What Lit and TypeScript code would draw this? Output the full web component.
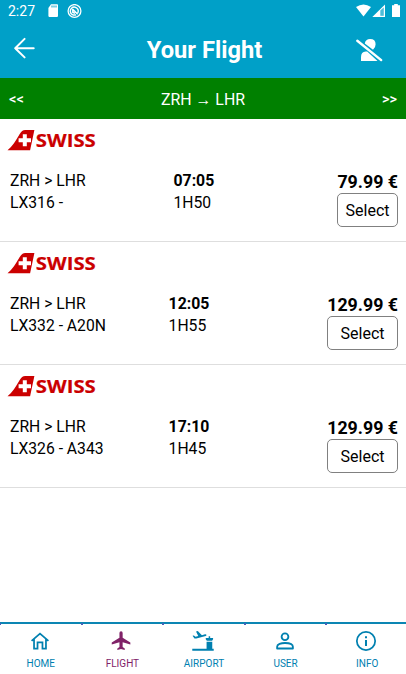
import { LitElement, html, css, svg } from "lit";
import { customElement, property } from "lit/decorators.js";

interface Flight { code: string; departs: string; duration: string; price: string; }

const flights: Flight[] = [
  { code: "LX316 -", departs: "07:05", duration: "1H50", price: "79.99 €" },
  { code: "LX332 - A20N", departs: "12:05", duration: "1H55", price: "129.99 €" },
  { code: "LX326 - A343", departs: "17:10", duration: "1H45", price: "129.99 €" },
];

const tabs = [
  { label: "HOME", icon: svg`<path fill="none" stroke="currentColor" stroke-width="1.9" d="M2.8 11.8 12 4l9.2 7.8M5.5 10v10.2h3.8v-6.8h5.4v6.8h3.8V10"/>` },
  { label: "FLIGHT", icon: svg`<path d="M22.2 15.8v-2.3l-8.4-5V3.2a1.75 1.75 0 0 0-3.5 0v5.3l-8.4 5v2.3l8.4-2.5v5.2L8 20.1v1.7l4-1.1 4.1 1.1v-1.7l-2.3-1.6v-5.2z"/>` },
  { label: "AIRPORT", icon: svg`<path d="m.6 6.3 1.5-.4 1.7 1.4 3-.8-2.4-5 1.9-.5 4.5 4.6 3.4-.9c1.6-.3 2.3 1.2.8 1.8L4.7 9.3l-2-.1zM15 8.6h3.2V6.7h1.6v1.9H23v1.5l-1.1 1.7h-5.7L15 10.1zM15.9 12.9h6.2v7.5h1.6v2.1H.3v-2.1h15.6z"/>` },
  { label: "USER", icon: svg`<g fill="none" stroke="currentColor" stroke-width="2"><circle cx="12" cy="7.4" r="3.7"/><path stroke-linejoin="round" d="M3.4 20.2v-1.9c0-2.8 4.3-4.1 8.6-4.1s8.6 1.3 8.6 4.1v1.9z"/></g>` },
  { label: "INFO", icon: svg`<circle cx="12" cy="12" r="10" fill="none" stroke="currentColor" stroke-width="1.9"/><path d="M10.9 6.7h2.2v2.2h-2.2zM10.9 10.9h2.2v6.5h-2.2z"/>` },
];

@customElement("flight-row")
class FlightRow extends LitElement {
  @property({ attribute: false }) flight!: Flight;

  static styles = css`
    :host { display: block; box-sizing: border-box; height: 123px; padding: 5px 8px 0 7px; border-bottom: 1px solid #dedede; }
    .logo { display: block; width: 94px; height: 32px; }
    .word { font: 700 18.4px "Open Sans", sans-serif; fill: #cb0000; stroke: #cb0000; stroke-width: .2; }
    .details { display: grid; grid-template-columns: 1fr 1fr auto; padding-left: 3px; margin-top: 14px; line-height: 21.5px; font-size: 15.7px; }
    .time { font-weight: 700; font-size: 15.8px; }
    .price { font-weight: 700; font-size: 17.8px; text-align: right; line-height: 24px; height: 22px; }
    .fare { display: flex; flex-direction: column; align-items: stretch; }
    button { box-sizing: border-box; height: 34px; min-width: 61px; padding: 0; margin-top: 1px; font: 16px Roboto, sans-serif; color: #000; background: #fff; border: 1px solid #808080; border-radius: 5px; }
  `;

  render() {
    const f = this.flight;
    return html`
      <svg class="logo" viewBox="0 -6 94 32" role="img" aria-label="SWISS">
        <path fill="#cb0000" d="M.5 20.3C5.5 16.5 8.8 10.5 12.4 4.6 14.4 1.3 15.7 0 18.2 0h9.2l-4.3 20.3z"/>
        <path fill="#fff" d="M15.8 4.2h4v4.1h4.2v3.9h-4.2v4.1h-4v-4.1h-4.2V8.3h4.2z"/>
        <text class="word" x="28.8" y="16.5" textLength="60" lengthAdjust="spacingAndGlyphs">SWISS</text>
      </svg>
      <div class="details">
        <div><div>ZRH &gt; LHR</div><div>${f.code}</div></div>
        <div><div class="time">${f.departs}</div><div>${f.duration}</div></div>
        <div class="fare"><div class="price">${f.price}</div><button>Select</button></div>
      </div>`;
  }
}

@customElement("app-root")
class AppRoot extends LitElement {
  static styles = css`
    :host { display: flex; flex-direction: column; height: 674px; overflow: hidden; background: #fff; color: #000; font-family: Roboto, sans-serif; }
    .status { display: flex; height: 22px; background: #00a0c8; color: #fff; align-items: center; font-size: 14px; padding: 0 6px 0 8px; }
    .clock { width: 38px; }
    .status svg { display: block; flex: none; }
    .debug { margin-left: 7px; }
    .signals { margin-left: auto; display: flex; }
    .header { display: grid; grid-template-columns: 60px 1fr 60px; align-items: center; height: 56px; background: #00a0c8; color: #fff; }
    .header svg { display: block; }
    .back { margin: 0 0 4px 12px; }
    .person { margin-left: 9px; }
    h1 { margin: 0; text-align: center; font-size: 23.7px; line-height: 28px; font-weight: 700; padding: 0 0 0 3px; }
    .route { display: grid; grid-template-columns: 1fr auto 1fr; align-items: center; height: 41px; padding: 1px 9px 0 9px; box-sizing: border-box; background: #008000; color: #fff; font-size: 15.9px; }
    .arrows { font-size: 14.5px; font-weight: 500; }
    .next { text-align: right; }
    .list { flex: 1; }
    nav { display: grid; grid-template-columns: repeat(5, 81.6px); height: 52px; box-sizing: border-box; border-top: 2px solid #0c86b3; }
    .tab { position: relative; display: flex; flex-direction: column; align-items: center; color: #0080b0; font-size: 10px; line-height: 12px; padding-top: 6px; }
    .tab::before { content: ""; position: absolute; left: -1px; top: -1px; width: 2px; height: 2px; background: #4860b8; }
    .tab.active { color: #802268; }
    .tab svg { width: 22px; height: 22px; margin-bottom: 6px; fill: currentColor; transform: translateX(-1px); }
  `;

  render() {
    return html`
      <div class="status">
        <span class="clock">2:27</span>
        <svg width="14" height="14" viewBox="0 0 14 14"><path fill="#fff" d="M5 .3h6.2q.8 0 .8.8v11q0 .8-.8.8h-8q-.8 0-.8-.8V4z"/><path stroke="#00a0c8" stroke-width="1" d="M6 1.5v2M8 1.5v2M10 1.5v2"/></svg>
        <svg class="debug" width="15" height="15" viewBox="0 0 15 15"><g fill="none" stroke="#fff"><circle cx="7.5" cy="7" r="6.4" stroke-width="1.3"/><path stroke-width="1.5" d="M10.8 9A4 4 0 1 0 9 10.7M5.5 5l5.2 5.3M5.8 5v3.2L8 9.3"/></g></svg>
        <div class="signals">
          <svg width="37" height="14" viewBox="0 0 37 14"><path fill="#fff" d="M1 3Q8.5-2.2 16 3L8.5 12.5z"/><path fill="#fff" d="M17.3 13 30 .5V13z"/><path fill="#00a0c8" d="M25.4 6.6 28.7 3.5v8.3h-3.3z"/><path fill="#fff" opacity=".3" d="M25.4 6.6 28.7 3.5v8.3h-3.3z"/></svg>
          <svg width="8" height="14" viewBox="0 0 8 14"><path fill="#fff" d="M2.2 0h3.6v1.2H8V13H0V1.2h2.2z"/></svg>
        </div>
      </div>
      <header class="header">
        <svg class="back" width="24" height="24" viewBox="0 0 24 24"><path fill="none" stroke="#fff" stroke-width="2" stroke-linecap="round" stroke-linejoin="round" d="M21.7 12.2H3.2M12.6 2.9 3.2 12.2l9.4 9.2"/></svg>
        <h1>Your Flight</h1>
        <svg class="person" width="30" height="26" viewBox="0 0 30 26"><path fill="#fff" d="M6 24v-3.8Q6 15 10.7 14.6h1.5L22.5 24zM9.8 6.6Q10.5 2 15.1 2q5.5 0 5.5 5.2 0 3.6-2.6 5.6z"/><path stroke="#fff" stroke-width="2.4" stroke-linecap="round" d="m2.3 3.8 23.9 19.3"/></svg>
      </header>
      <div class="route"><span class="arrows">&lt;&lt;</span><span>ZRH → LHR</span><span class="arrows next">&gt;&gt;</span></div>
      <main class="list">${flights.map((f) => html`<flight-row .flight=${f}></flight-row>`)}</main>
      <nav>${tabs.map((t) => html`<div class="tab ${t.label === "FLIGHT" ? "active" : ""}"><svg viewBox="0 0 24 24">${t.icon}</svg>${t.label}</div>`)}</nav>`;
  }
}
